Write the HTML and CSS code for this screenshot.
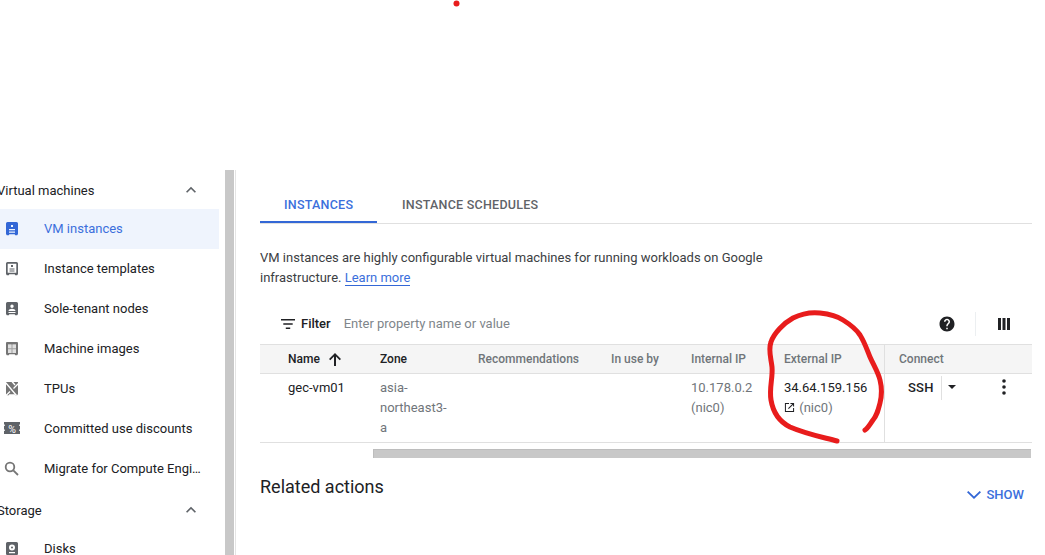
FILE: index.html
```html
<!DOCTYPE html>
<html lang="en">
<head>
<meta charset="utf-8">
<title>VM instances</title>
<link rel="stylesheet" href="styles.css">
</head>
<body>
<div class="page">
  <aside class="sidebar">
    <nav class="nav">
      <div class="section section-first"><span class="section-label">Virtual machines</span>
        <svg class="chev" viewBox="0 0 24 24"><path d="M12 8l-6 6 1.41 1.41L12 10.83l4.59 4.58L18 14z"/></svg></div>
      <div class="row row-active"><svg class="ico" viewBox="0 0 24 24"><path fill-rule="evenodd" d="M7.500 5h9A1.500 1.500 0 0 1 18 6.500v10.500l-.8 1.300h-2l-.5-1H9.300l-.5 1h-2L6 17V6.500A1.500 1.500 0 0 1 7.500 5zM11 8v2h2V8zM9 12v1.200h6V12zM9 14.500v1.200h6v-1.200z"/></svg><span>VM instances</span></div>
      <div class="row"><svg class="ico" viewBox="0 0 24 24"><path fill-rule="evenodd" d="M7.500 5h9A1.500 1.500 0 0 1 18 6.500v10.500l-.8 1.300h-2l-.5-1H9.300l-.5 1h-2L6 17V6.500A1.500 1.500 0 0 1 7.500 5zM7.700 6.700v9h8.600v-9zM11 8h2v2h-2zM9.500 11.500h5v1.100h-5zM9.500 13.500h5v1.100h-5z"/></svg><span>Instance templates</span></div>
      <div class="row"><svg class="ico" viewBox="0 0 24 24"><path fill-rule="evenodd" d="M7.500 5h9A1.500 1.500 0 0 1 18 6.500v10.500l-.8 1.300h-2l-.5-1H9.300l-.5 1h-2L6 17V6.500A1.500 1.500 0 0 1 7.500 5zM12 7.500a1.700 1.700 0 1 0 0 3.400 1.700 1.700 0 0 0 0-3.400zM8.500 14h7c0-1.600-2-2.300-3.500-2.300s-3.500.7-3.500 2.300zM8.500 15v1h7v-1z"/></svg><span>Sole-tenant nodes</span></div>
      <div class="row"><svg class="ico ico-soft" viewBox="0 0 24 24"><path fill-rule="evenodd" d="M7 5h10a1 1 0 0 1 1 1v11l-.8 1.300h-2l-.5-1H9.300l-.5 1h-2L6 17V6a1 1 0 0 1 1-1zM8 7.500v3.700h3.500V7.500zM12.500 7.500v3.700H16V7.500zM8 12.200V16h3.500v-3.800zM12.500 12.200V16H16v-3.800z"/><path class="soft-fill" d="M8 7.500h8V16H8z"/></svg><span>Machine images</span></div>
      <div class="row"><svg class="ico ico-soft" viewBox="0 0 24 24"><path d="M6 5h12v12l-.8 1.300h-2l-.5-1H9.300l-.5 1h-2L6 17z"/><path class="cut" d="M5.500 5.500L16.500 18.500M18.500 6.500L13.500 11.500M10 14.500L6 18.500M12 4.500L15 8"/></svg><span>TPUs</span></div>
      <div class="row"><svg class="ico" viewBox="0 0 24 24"><path d="M4 5h16v2.500h-.8v1.500h.8v3.500h-.8V14h.8v3H4v-3h.8v-1.500H4V9h.8V7.500H4z"/><text class="pct" x="12" y="15.500" text-anchor="middle">%</text></svg><span>Committed use discounts</span></div>
      <div class="row"><svg class="ico ico-line" viewBox="0 0 24 24"><circle cx="10" cy="10" r="4.300"/><path d="M13.300 13.300L18 18"/></svg><span>Migrate for Compute Engi…</span></div>
      <div class="section section-next"><span class="section-label">Storage</span>
        <svg class="chev" viewBox="0 0 24 24"><path d="M12 8l-6 6 1.41 1.41L12 10.83l4.59 4.58L18 14z"/></svg></div>
      <div class="row"><svg class="ico" viewBox="0 0 24 24"><path fill-rule="evenodd" d="M7.500 5h9A1.500 1.500 0 0 1 18 6.500v10.500l-.8 1.300H6.800L6 17V6.500A1.500 1.500 0 0 1 7.500 5zM12 7.500a3 3 0 1 0 0 6 3 3 0 0 0 0-6zM12 9.500a1 1 0 1 1 0 2 1 1 0 0 1 0-2zM9 15v1.200h6V15z"/></svg><span>Disks</span></div>
    </nav>
    <div class="sidebar-scroll"></div>
  </aside>

  <main class="main">
    <div class="tabs">
      <div class="tab tab-active">INSTANCES</div>
      <div class="tab">INSTANCE SCHEDULES</div>
    </div>
    <p class="intro">VM instances are highly configurable virtual machines for running workloads on Google<br>infrastructure. <a class="link" href="#">Learn more</a></p>
    <div class="filter">
      <svg class="filter-ico" viewBox="0 0 14 10"><path d="M0 0h14v1.500H0zM2.300 4.200h9.400v1.500H2.300zM4.800 8.500h4.400V10H4.800z"/></svg>
      <span class="filter-label">Filter</span>
      <span class="filter-hint">Enter property name or value</span>
      <svg class="help" viewBox="0 0 24 24"><path d="M12 2C6.480 2 2 6.480 2 12s4.480 10 10 10 10-4.480 10-10S17.520 2 12 2zm1 17h-2v-2h2v2zm2.070-7.750l-.9.920C13.450 12.900 13 13.500 13 15h-2v-.5c0-1.100.45-2.100 1.170-2.830l1.240-1.260c.37-.36.590-.86.590-1.410 0-1.100-.9-2-2-2s-2 .9-2 2H8c0-2.210 1.790-4 4-4s4 1.790 4 4c0 .88-.36 1.680-.930 2.250z"/></svg>
      <span class="filter-sep"></span>
      <svg class="cols" viewBox="0 0 12 12"><path d="M0 0h3v12H0zM4.500 0h3v12h-3zM9 0h3v12H9z"/></svg>
    </div>
    <div class="table">
      <div class="th th-name th-dark">Name <svg class="sort" viewBox="0 0 12 13"><path d="M6 0L0 6l1.300 1.300L5 3.600V13h2V3.600l3.700 3.700L12 6z"/></svg></div>
      <div class="th th-dark">Zone</div>
      <div class="th">Recommendations</div>
      <div class="th">In use by</div>
      <div class="th">Internal IP</div>
      <div class="th">External IP</div>
      <div class="th th-connect">Connect</div>
      <div class="td td-name">gec-vm01</div>
      <div class="td td-muted">asia-<br>northeast3-<br>a</div>
      <div class="td"></div>
      <div class="td"></div>
      <div class="td td-muted">10.178.0.2<br>(nic0)</div>
      <div class="td">34.64.159.156<br><svg class="ext" viewBox="0 0 12 12"><path d="M1 1h4.500v1.100H2.100v7.800h7.800V6.500H11V11H1zM7 1h4v4H9.900V2.900L5.200 7.600l-.8-.8L9.100 2.100H7z"/></svg> <span class="td-nic">(nic0)</span></div>
      <div class="td td-connect">
        <span class="ssh">SSH</span>
        <span class="ssh-caret"><span class="caret"></span></span>
        <svg class="dots" viewBox="0 0 4 16"><circle cx="2" cy="2" r="1.800"/><circle cx="2" cy="8" r="1.800"/><circle cx="2" cy="14" r="1.800"/></svg>
      </div>
    </div>
    <div class="hscroll"></div>
    <div class="related">
      <h2 class="related-title">Related actions</h2>
      <div class="show"><svg class="show-chev" viewBox="0 0 14 8"><path d="M1.300 0L7 5.500 12.700 0 14 1.300 7 8 0 1.300z"/></svg>SHOW</div>
    </div>
  </main>
</div>

<svg class="scribble" viewBox="0 0 1045 555">
  <circle class="dot" cx="456.500" cy="3.500" r="3"/>
  <path class="ink" d="M837 441C822 437 806 434 790 427C780 422 773 412 771 400C769 388 773 378 772 367C771 358 768 350 771 342C774 333 784 323 793 318C803 313 811 312 820 313C829 314 837 316 843 320C851 325 856 329 860 335C865 343 867 350 870 357C874 366 878 372 880 380C882 388 882 395 880 403C878 411 877 415 873 420C870 424 868 428 865 430"/>
</svg>
</body>
</html>
```
FILE: styles.css
```css
* { box-sizing: border-box; }
html, body { margin: 0; height: 555px; overflow: hidden; background: #fff; }
body {
  font-family: Roboto, "Liberation Sans", sans-serif;
  font-size: 13px;
  line-height: 20px;
  color: #202124;
  position: relative;
}
.page { display: flex; padding-top: 170px; height: 555px; overflow: hidden; }

/* sidebar */
.sidebar { display: flex; width: 260px; flex: none; }
.nav { width: 225px; flex: none; overflow: hidden; }
.sidebar-scroll {
  width: 11px;
  height: 385px;
  background: linear-gradient(to right, #c8c8c8 9px, #fff 9px, #fff 10px, #e4e4e4 10px);
  flex: none;
}
.section {
  height: 39px;
  display: flex;
  align-items: center;
  justify-content: space-between;
  padding-right: 24px;
}
.section-first { padding-top: 3px; }
.section-next { height: 40px; padding-top: 4px; }
.section-label { margin-left: -3px; color: #202124; }
.chev { width: 20px; height: 20px; fill: #5f6368; margin-top: -2px; }
.row {
  height: 40px;
  width: 219px;
  display: flex;
  align-items: center;
  padding-left: 44px;
  position: relative;
  white-space: nowrap;
}
.ico {
  position: absolute;
  left: 0;
  top: 8px;
  width: 24px;
  height: 24px;
  fill: #5f6368;
}
.ico-soft { fill: #757575; }
.soft-fill { fill: #c4c4c4; opacity: .55; }
.ico-line { fill: none; stroke: #757575; stroke-width: 1.800; }
.cut { fill: none; stroke: #fff; stroke-width: 1.300; }
.pct { fill: #fff; font-size: 10.500px; font-family: Roboto, sans-serif; }
.row-active { background: #eff4fd; color: #3b6fdc; }
.row-active .ico { fill: #3367d6; }

/* main */
.main { width: 772px; flex: none; padding-top: 15px; }
.tabs { display: flex; height: 39px; border-bottom: 1px solid #e0e0e0; }
.tab {
  height: 38px;
  padding: 10px 24px 0;
  font-weight: 500;
  font-size: 12.500px;
  letter-spacing: .25px;
  color: #5f6368;
  white-space: nowrap;
}
.tab + .tab { padding-left: 25px; }
.tab-active { color: #3b6fdc; border-bottom: 2px solid #3367d6; width: 117px; }
.intro { margin: 0; padding-top: 24px; height: 80px; color: #3c4043; }
.link { color: #3b6fdc; text-decoration: none; border-bottom: 1px solid #3367d6; }
.filter {
  display: flex;
  align-items: center;
  height: 40px;
  padding: 0 22px 0 21px;
}
.filter-ico { width: 14px; height: 10px; margin-right: 6px; fill: #202124; }
.filter-label { font-weight: 500; margin-right: 13px; color: #202124; }
.filter-hint { color: #80868b; flex: 1; }
.help { width: 18px; height: 18px; fill: #202124; margin-right: 19px; }
.filter-sep { width: 1px; height: 24px; background: #eceff1; margin-right: 22px; }
.cols { width: 12px; height: 12px; fill: #202124; }

/* table */
.table {
  display: grid;
  grid-template-columns: 120px 98px 133px 80px 93px 100px 148px;
  grid-template-rows: 30px 69px;
}
.th {
  background: #f5f5f5;
  border-top: 1px solid #e0e0e0;
  border-bottom: 1px solid #e0e0e0;
  font-size: 12px;
  font-weight: 500;
  color: #70757a;
  line-height: 28px;
  white-space: nowrap;
}
.th-dark { color: #202124; }
.th-name { padding-left: 28px; display: flex; align-items: center; gap: 9px; }
.sort { width: 12px; height: 13px; fill: #202124; }
.th-connect { border-left: 1px solid #e0e0e0; padding-left: 14px; }
.td { padding-top: 4px; border-bottom: 1px solid #e0e0e0; white-space: nowrap; color: #202124; }
.td-name { padding-left: 28px; }
.td-muted { color: #70757a; }
.td-nic { color: #70757a; }
.ext { width: 11px; height: 11px; fill: #202124; vertical-align: -1px; margin-right: 1px; }
.td-connect {
  border-left: 1px solid #e0e0e0;
  padding-left: 23px;
  display: flex;
  align-items: flex-start;
  position: relative;
}
.ssh { font-weight: 500; width: 33px; color: #202124; letter-spacing: .2px; }
.ssh-caret {
  width: 20px;
  height: 24px;
  margin-top: -2px;
  border-left: 1px solid #e0e0e0;
  display: flex;
  align-items: center;
  justify-content: center;
  padding-bottom: 3px;
}
.caret {
  border-left: 4px solid transparent;
  border-right: 4px solid transparent;
  border-top: 4px solid #202124;
}
.dots { width: 4px; height: 16px; fill: #202124; margin: 1px 0 0 41px; }
.hscroll {
  height: 9px;
  margin: 6px 1px 0 113px;
  background: #c8c8c8;
  border-top: 1px solid #bdbdbd;
  border-left: 1px solid #bdbdbd;
}
.related {
  position: relative;
  display: flex;
  justify-content: space-between;
  padding-top: 19px;
}
.related-title { margin: 0; font-size: 18px; line-height: 20px; font-weight: 400; color: #202124; }
.show {
  display: flex;
  align-items: center;
  gap: 6px;
  margin: 8px 8px 0 0;
  height: 20px;
  font-weight: 500;
  font-size: 13px;
  color: #3b6fdc;
}
.show-chev { width: 14px; height: 8px; fill: #3367d6; }

/* hand-drawn annotation */
.scribble { position: absolute; left: 0; top: 0; width: 1045px; height: 555px; pointer-events: none; }
.dot { fill: #e81c1c; }
.ink { fill: none; stroke: #e81c1c; stroke-width: 5; stroke-linecap: round; stroke-linejoin: round; }
```
